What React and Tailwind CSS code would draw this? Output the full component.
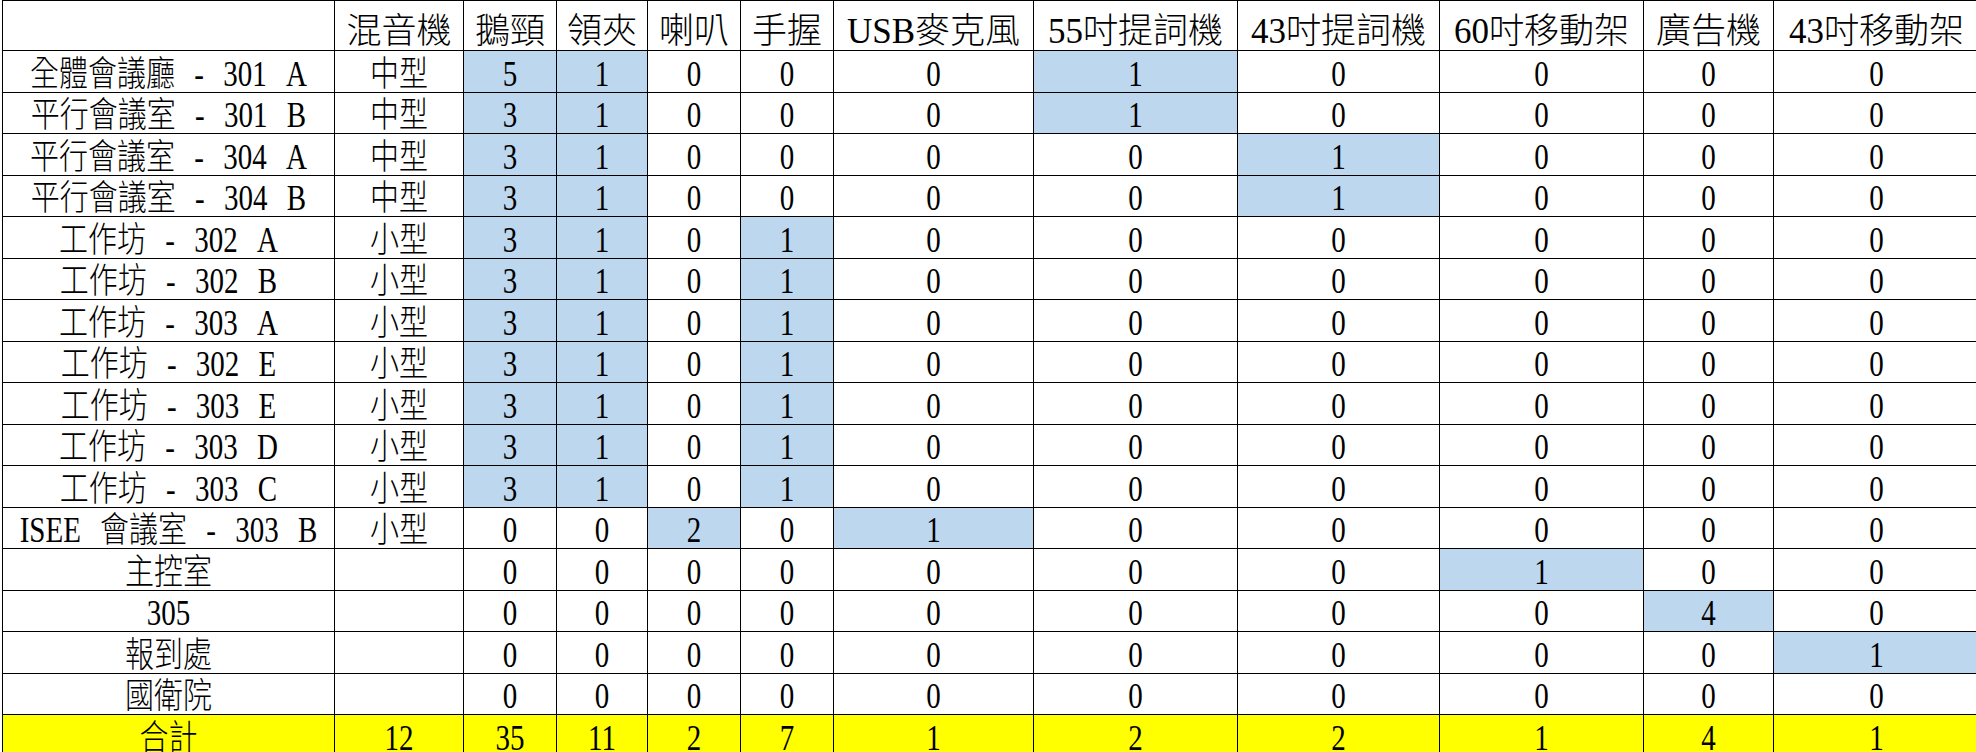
import React from 'react'

const headers = ['混音機', '鵝頸', '領夾', '喇叭', '手握', 'USB麥克風', '55吋提詞機', '43吋提詞機', '60吋移動架', '廣告機', '43吋移動架']

const w4 = [3, 1, 0, 1, 0, 0, 0, 0, 0, 0]

// [room, type, counts...]; a non-zero count is shaded blue
const rows = [
  ['全體會議廳 - 301 A', '中型', [5, 1, 0, 0, 0, 1, 0, 0, 0, 0]],
  ['平行會議室 - 301 B', '中型', [3, 1, 0, 0, 0, 1, 0, 0, 0, 0]],
  ['平行會議室 - 304 A', '中型', [3, 1, 0, 0, 0, 0, 1, 0, 0, 0]],
  ['平行會議室 - 304 B', '中型', [3, 1, 0, 0, 0, 0, 1, 0, 0, 0]],
  ['工作坊 - 302 A', '小型', w4],
  ['工作坊 - 302 B', '小型', w4],
  ['工作坊 - 303 A', '小型', w4],
  ['工作坊 - 302 E', '小型', w4],
  ['工作坊 - 303 E', '小型', w4],
  ['工作坊 - 303 D', '小型', w4],
  ['工作坊 - 303 C', '小型', w4],
  ['ISEE 會議室 - 303 B', '小型', [0, 0, 2, 0, 1, 0, 0, 0, 0, 0]],
  ['主控室', '', [0, 0, 0, 0, 0, 0, 0, 1, 0, 0]],
  ['305', '', [0, 0, 0, 0, 0, 0, 0, 0, 4, 0]],
  ['報到處', '', [0, 0, 0, 0, 0, 0, 0, 0, 0, 1]],
  ['國衛院', '', [0, 0, 0, 0, 0, 0, 0, 0, 0, 0]],
]

const totals = [12, 35, 11, 2, 7, 1, 2, 2, 1, 4, 1]

function Cell({ children, bg = 'bg-white' }) {
  return (
    <div className={`${bg} flex items-end justify-center whitespace-nowrap leading-none text-black`}>
      {children}
    </div>
  )
}

// data text is drawn a bit taller than wide, like the sheet
function Txt({ children, className = '' }) {
  return (
    <span className={`inline-block origin-bottom scale-y-[1.2] text-[29px] ${className}`}>{children}</span>
  )
}

export default function App() {
  return (
    <div className="h-[752px] w-[1976px] overflow-hidden bg-white font-light font-['Liberation_Serif','Noto_Sans_CJK_TC',serif]">
      <div className="ml-[2px] grid w-max gap-px bg-black p-px grid-cols-[331px_128px_92px_90px_92px_92px_199px_203px_201px_203px_129px_205px] grid-rows-[49px_repeat(16,40.5px)_41px]">
        {/* Header */}
        <Cell />
        {headers.map(h => (
          <Cell key={h}><span className="pb-px text-[35px]">{h}</span></Cell>
        ))}

        {/* Rooms */}
        {rows.map(([room, type, counts]) => (
          <React.Fragment key={room}>
            <Cell><Txt className="[word-spacing:12px]">{room}</Txt></Cell>
            <Cell><Txt>{type}</Txt></Cell>
            {counts.map((n, i) => (
              <Cell key={i} bg={n > 0 ? 'bg-[#bdd7ee]' : 'bg-white'}><Txt>{n}</Txt></Cell>
            ))}
          </React.Fragment>
        ))}

        {/* Totals */}
        <Cell bg="bg-[#ffff00]"><Txt>合計</Txt></Cell>
        {totals.map((n, i) => (
          <Cell key={i} bg="bg-[#ffff00]"><Txt>{n}</Txt></Cell>
        ))}
      </div>
    </div>
  )
}
